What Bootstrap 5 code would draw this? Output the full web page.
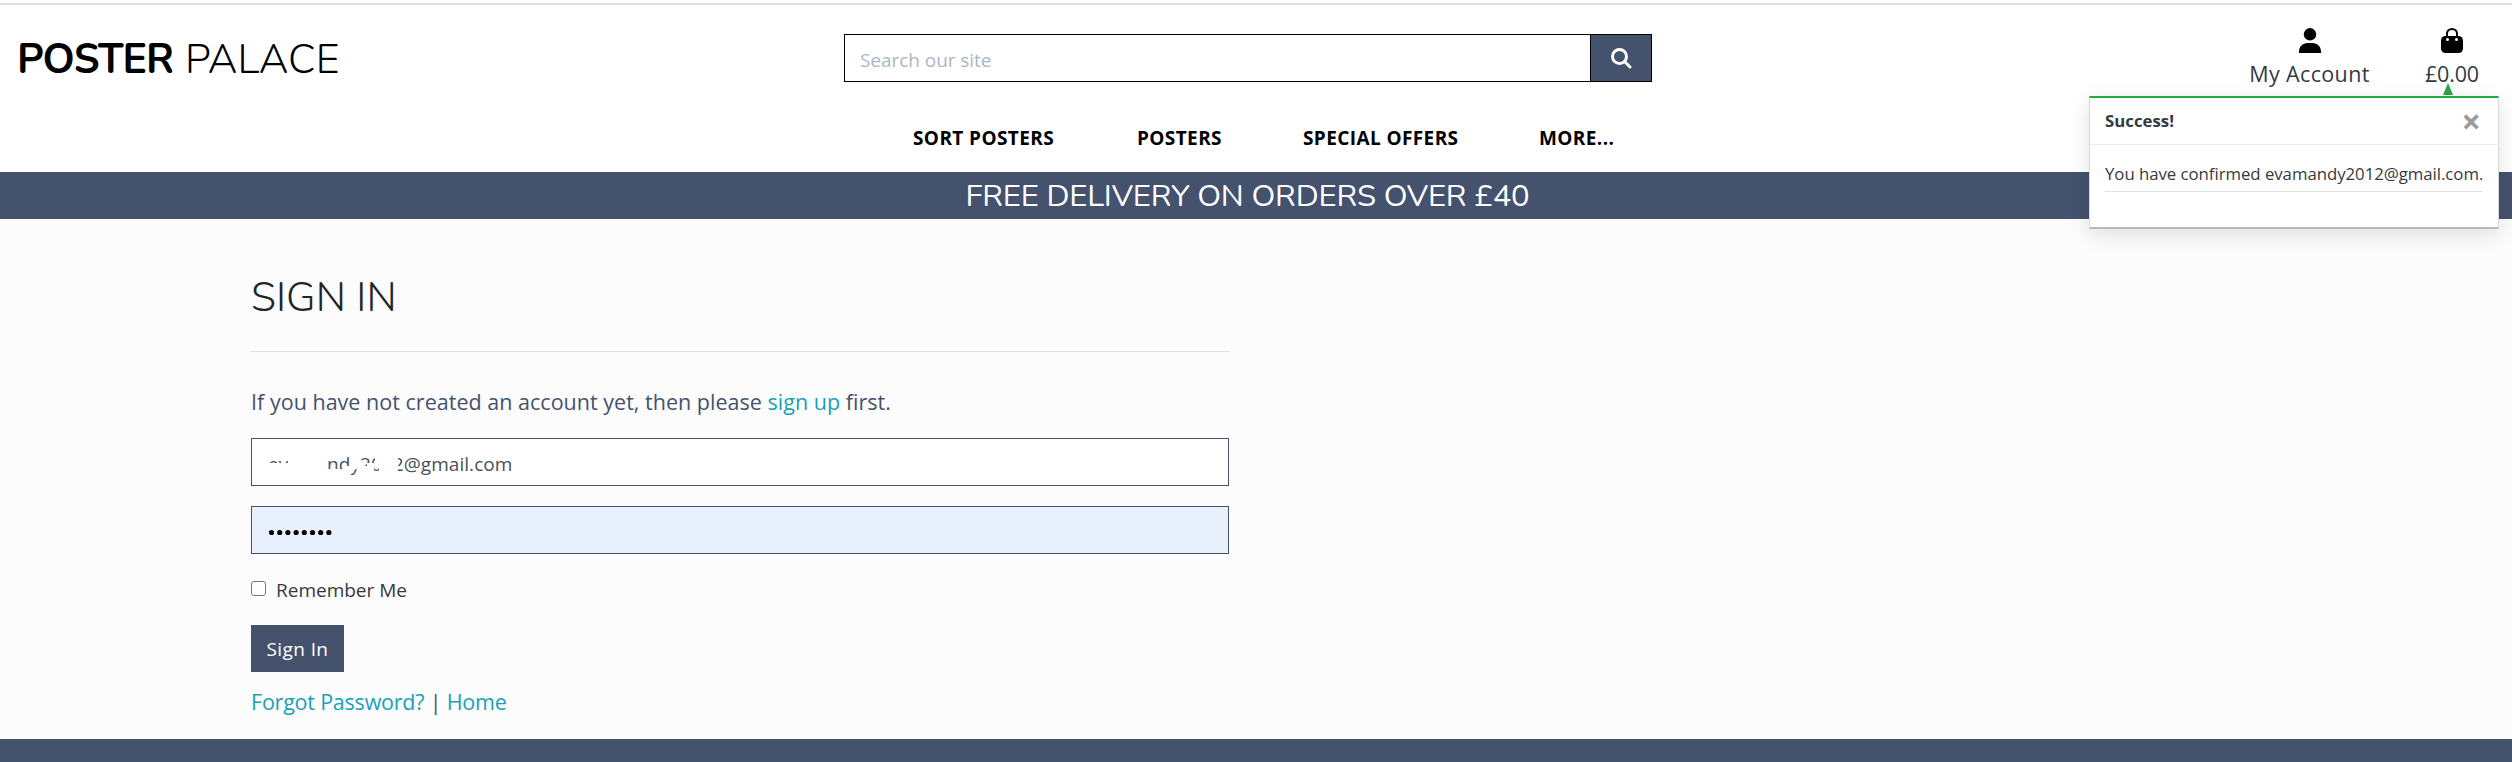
<!DOCTYPE html>
<html lang="en">
<head>
<meta charset="utf-8">
<title>Poster Palace</title>
<link rel="stylesheet" href="https://cdn.jsdelivr.net/npm/bootstrap@5.3.0/dist/css/bootstrap.min.css">
<style>
:root{--navy:#45526e;--display:"Nunito","Lato",sans-serif}
body{font-family:"Open Sans","Noto Sans",sans-serif;background:#fcfcfc;color:#343a40;overflow:hidden;height:762px}
a{text-decoration:none;color:inherit}
.topgap{height:3px;background:#fff}
.site-head{height:169px;background:#fff;border-top:2px solid #e0e0e0}
.head-row{display:grid;grid-template-columns:844px 808px 1fr;height:98px}
.logo{font-family:var(--display);font-size:41px;line-height:48px;color:#000;padding:31px 0 0 17px;white-space:nowrap}
.logo b{font-weight:680;letter-spacing:-1px;width:156px}
.logo .thin{font-weight:300;margin-left:12px;letter-spacing:.15px}
.searchbox{height:48px;margin-top:29px}
.searchbox .form-control{height:48px;border:1px solid #000;border-right:0;border-radius:0;font-size:19px;padding:3px 15px 0;color:#445069;letter-spacing:-.05px}
.searchbox .form-control::placeholder{color:#aab7c4;opacity:1}
.searchbox .btn{flex:none;width:62px;height:48px;border:1px solid #000;border-radius:0;background:var(--navy);padding:0;line-height:1}
.acct{font-size:21.5px;line-height:30px;padding-top:23px;text-align:center;white-space:nowrap}
.acct svg{display:block;margin:0 auto 6px}
.acct-user{margin-left:597px;width:121px;letter-spacing:.36px}
.acct-bag{margin-left:55px;width:54px;letter-spacing:-.17px}
.mainnav{font-weight:700;font-size:19px;line-height:28px;color:#000;padding:21px 0 0 913px;white-space:nowrap}
.mainnav a{letter-spacing:.4px;flex:none}
.nav-sort{width:224px}
.nav-posters{width:166px}
.nav-offers{width:236px}
.banner{height:47px;background:var(--navy);color:#fff;font-family:var(--display);font-size:31px;line-height:48px;padding-right:17px;letter-spacing:-.17px}
.signin{width:978px;margin-left:251px}
.signin h2{font-family:var(--display);font-weight:350;font-size:41px;line-height:48px;padding-top:55px;margin:0;color:#212529;letter-spacing:.05px}
.rule{height:1px;background:#e1e1e2;margin-top:29px}
.lead-in{font-size:21.5px;line-height:34px;color:#45526e;margin:33px 0 19px;letter-spacing:.02px}
.teal{color:#17a2b8}
.field{height:48px;border:1px solid var(--navy);font-size:19px;padding:2px 0 0 16px;background:#fff;color:#495057;line-height:46px;position:relative;letter-spacing:.05px}
.field svg{position:absolute;left:0;top:0}
.pw{background:#e8f0fe;margin-top:20px;padding:20px 0 0 17px}
.pw svg{position:static;display:block}
.remember{font-size:19px;line-height:30px;height:30px;margin-top:21px}
.chk{width:15px;height:15px;border:1px solid #767676;border-radius:3px;background:#fff;margin:6px 10px 0 0}
.btn-sign{height:47px;width:93px;background:var(--navy)!important;color:#fff!important;border:0;border-radius:0;padding:2px 0 0;font-size:19px;margin-top:20px;display:block;letter-spacing:.4px}
.links{font-size:21.5px;line-height:30px;height:30px;margin-top:15px;color:#45526e;letter-spacing:-.22px}
.foot{height:23px;background:var(--navy);margin-top:22px}
.notice{position:absolute;left:2089px;top:96px;width:410px;height:133px;background:#fff;border:1px solid #d6d9de;border-top:2px solid #28a745;border-bottom:2px solid #b4bac6;box-shadow:0 5px 20px rgba(0,0,0,.12);font-size:16.8px}
.notice-head{height:47px;border-bottom:1px solid #ececee;padding:0 17px 0 15px;font-weight:700}
.notice-x{font-size:34px;line-height:40px;color:#999c9f}
.notice-body{margin:17px 15px 0;height:30px;line-height:24px;border-bottom:1px solid #e2e2e4;white-space:nowrap;letter-spacing:-.04px}
.notice-arrow{position:absolute;left:2443px;top:83px}
</style>
<script src="https://cdn.jsdelivr.net/npm/bootstrap@5.3.0/dist/js/bootstrap.bundle.min.js"></script>
</head>
<body>
<div class="topgap"></div>
<header class="site-head">
  <div class="head-row">
    <div class="logo d-flex"><b>POSTER</b><span class="thin">PALACE</span></div>
    <form class="d-flex searchbox">
      <input class="form-control" placeholder="Search our site">
      <button class="btn" type="button"><svg width="21" height="21" viewBox="0 0 21 21" fill="none" stroke="#fff" stroke-width="3"><circle cx="8.500" cy="8.500" r="7"/><path d="M13.500 13.500L19 19" stroke-linecap="round"/></svg></button>
    </form>
    <div class="d-flex acct">
      <a class="acct-user"><svg width="22" height="25" viewBox="0 0 22 25"><circle cx="11" cy="6.300" r="6.200"/><path d="M0 25v-1.500C0 18.500 4 15 8.500 15h5c4.500 0 8.500 3.500 8.500 8.500V25z"/></svg>My Account</a>
      <a class="acct-bag"><svg width="22" height="25" viewBox="0 0 22 25"><path d="M6 9V5.500a5 4.500 0 0 1 10 0V9" fill="none" stroke="#000" stroke-width="2"/><rect y="8" width="22" height="17" rx="4.500"/><circle cx="6.500" cy="11.500" r="1.500" fill="#fff"/><circle cx="15.500" cy="11.500" r="1.500" fill="#fff"/></svg>£0.00</a>
    </div>
  </div>
  <nav class="mainnav d-flex"><a class="nav-sort">SORT POSTERS</a><a class="nav-posters">POSTERS</a><a class="nav-offers">SPECIAL OFFERS</a><a>MORE...</a></nav>
</header>
<div class="banner text-center">FREE DELIVERY ON ORDERS OVER £40</div>
<main class="signin">
  <h2>SIGN IN</h2>
  <div class="rule"></div>
  <p class="lead-in">If you have not created an account yet, then please <a class="teal">sign up</a> first.</p>
  <div class="field">evamandy2012@gmail.com
    <svg width="160" height="46" viewBox="252 439 160 46" fill="#fff"><path d="M266 463H288V455H327V482H266zM325 469H339V482H325zM339 471L346 466H350V455H360V467L351 472V482H339zM359 466H367V463H374V482H359zM375 455H398V482H375V473H379V467H375zM397 466H400V469H397z"/></svg></div>
  <div class="field pw"><svg width="66" height="10" viewBox="0 0 66 10"><path d="M2.500 5.500h60" stroke="#000" stroke-width="5.200" stroke-linecap="round" stroke-dasharray="0 8.200"/></svg></div>
  <div class="remember d-flex"><span class="chk"></span>Remember Me</div>
  <button class="btn btn-sign" type="button">Sign In</button>
  <div class="links"><a class="teal">Forgot Password?</a> | <a class="teal">Home</a></div>
</main>
<footer class="foot"></footer>
<svg class="notice-arrow" width="10" height="12" viewBox="0 0 10 12"><path d="M5 0L10 12H0z" fill="#28a745"/></svg>
<section class="notice">
  <div class="notice-head d-flex justify-content-between align-items-center"><span>Success!</span><span class="notice-x">×</span></div>
  <div class="notice-body">You have confirmed evamandy2012@gmail.com.</div>
</section>
</body>
</html>
